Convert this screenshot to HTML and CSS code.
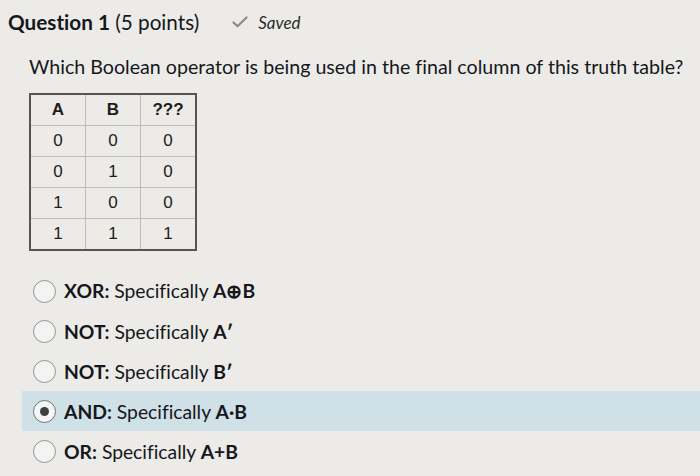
FILE: index.html
```html
<!DOCTYPE html>
<html>
<head>
<meta charset="utf-8">
<link rel="stylesheet" href="styles.css">
</head>
<body>
<div class="page">
  <div class="head">
    <span class="qtitle"><b>Question 1</b> (5 points)</span>
    <span class="saved">
      <svg class="check" width="16" height="12" viewBox="0 0 16 12"><path d="M1.5 6.5 L5.5 10.2 L14.5 1.5" fill="none" stroke="#8a8a8a" stroke-width="2.2" stroke-linecap="round" stroke-linejoin="round"/></svg>
      <i>Saved</i>
    </span>
  </div>
  <p class="prompt">Which Boolean operator is being used in the final column of this truth table?</p>
  <table class="truth">
    <tr><th>A</th><th>B</th><th>???</th></tr>
    <tr><td>0</td><td>0</td><td>0</td></tr>
    <tr><td>0</td><td>1</td><td>0</td></tr>
    <tr><td>1</td><td>0</td><td>0</td></tr>
    <tr><td>1</td><td>1</td><td>1</td></tr>
  </table>
  <div class="options">
    <div class="opt"><span class="radio"></span><span><b>XOR:</b> Specifically <b>A⊕B</b></span></div>
    <div class="opt"><span class="radio"></span><span><b>NOT:</b> Specifically <b>A′</b></span></div>
    <div class="opt"><span class="radio"></span><span><b>NOT:</b> Specifically <b>B′</b></span></div>
    <div class="opt selected"><span class="radio on"></span><span><b>AND:</b> Specifically <b>A·B</b></span></div>
    <div class="opt"><span class="radio"></span><span><b>OR:</b> Specifically <b>A+B</b></span></div>
  </div>
</div>
</body>
</html>
```

FILE: styles.css
```css
html, body {
  margin: 0;
  padding: 0;
  background: #ecebe8;
}
body {
  font-family: Lato, "Open Sans", sans-serif;
  font-variant-ligatures: none;
  color: #15171c;
  width: 700px;
  height: 476px;
  overflow: hidden;
}
.page {
  padding: 10px 0 0 8px;
}
.head {
  display: flex;
  align-items: center;
  height: 24px;
}
.qtitle {
  font-size: 20.7px;
}
.qtitle b {
  font-weight: 700;
}
.saved {
  display: flex;
  align-items: center;
  margin-left: 33px;
  color: #2b2b2b;
  font-size: 17px;
}
.check {
  margin-right: 10px;
}
.prompt {
  margin: 21px 0 0 21px;
  font-size: 19.65px;
  line-height: 24px;
  white-space: nowrap;
}
.truth {
  margin: 14px 0 0 21px;
  border-collapse: collapse;
  border: 2px solid #555;
  font-family: "Liberation Sans", Arial, sans-serif;
  font-size: 17px;
  color: #1c1c1c;
}
.truth th, .truth td {
  width: 54px;
  height: 30px;
  padding: 0;
  text-align: center;
  border: 1px solid #bdbdbb;
}
.truth th {
  font-weight: 700;
}
.options {
  margin-top: 20px;
  margin-left: 14px;
}
.opt {
  display: flex;
  align-items: center;
  height: 40px;
  padding-left: 11px;
  font-size: 19.3px;
  color: #15171c;
}
.opt b {
  font-weight: 700;
}
.opt.selected {
  background: #cfe0e7;
}
.radio {
  width: 21px;
  height: 21px;
  border-radius: 50%;
  border: 1px solid #8e9195;
  background: #f2f3f3;
  margin-right: 8px;
  box-sizing: content-box;
  flex: none;
  position: relative;
}
.radio.on {
  border: 1.5px solid #6f7276;
  background: #f4f5f5;
}
.radio.on::after {
  content: "";
  position: absolute;
  left: 50%;
  top: 50%;
  width: 9px;
  height: 9px;
  margin: -4.5px 0 0 -4.5px;
  border-radius: 50%;
  background: #3d3f43;
}
```
